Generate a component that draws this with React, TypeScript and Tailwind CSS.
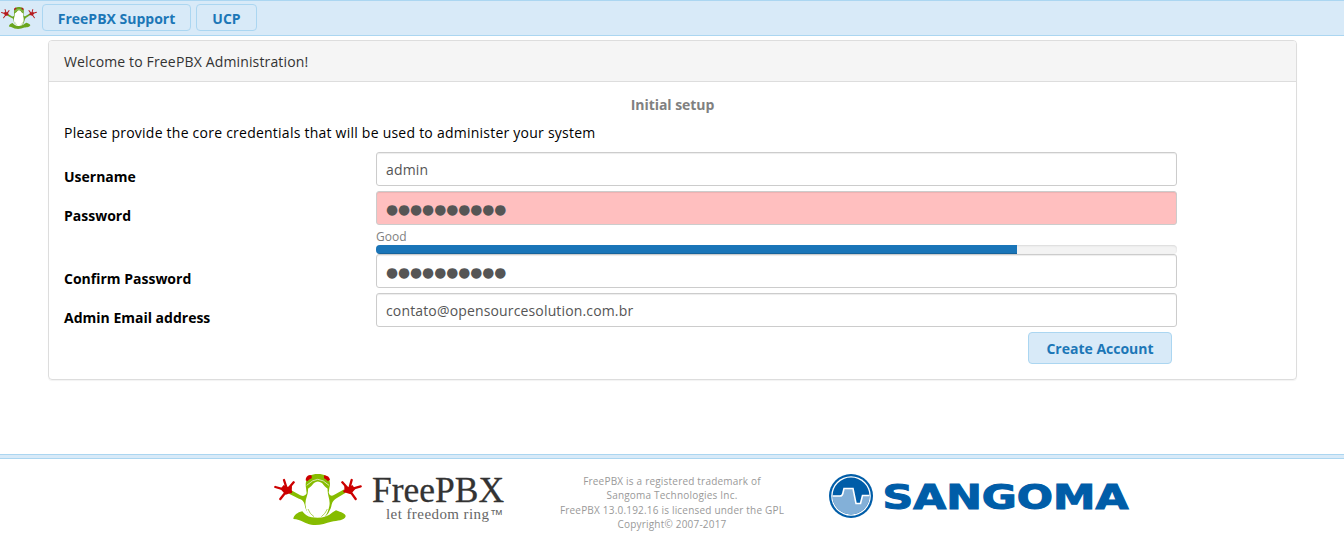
import React from 'react';

function Frog({ className, small }: { className: string; small?: boolean }) {
  const green = small ? '#6aa51e' : '#86bc00';
  const red = small ? '#b51a1e' : '#cc0000';
  return (
    <svg className={className} viewBox="12 18 264 153" preserveAspectRatio="none" aria-hidden="true">
      <path d="M108 60 C104 38 114 25 124 21 Q143 14 163 21 C176 26 184 40 178 60 L176 74 Q180 88 193 80 L223 64 L227 74 L202 89 C188 97 186 104 184 115 Q180 132 166 146 L122 146 C110 132 105 120 104 110 C102 99 96 95 87 92 L57 77 L61 65 L91 82 Q105 88 110 76Z" fill={green} />
      <path d="M114 62 C123 56 126 52 132 45 Q143 36 156 45 C162 52 166 58 173 62 C171 82 182 94 178 114 C174 134 168 143 160 152 L126 152 C116 142 109 132 107 114 C103 94 116 82 114 62Z" fill="#fff" />
      <path d="M70 153 C71 142 82 133 97 130 C103 138 112 146 125 148 C150 152 172 148 188 133 L198 127 C214 133 227 137 227 145 C224 158 202 158 184 161 C165 166 148 173 124 170 C106 168 94 154 70 153Z" fill={green} />
      <path d="M110 52 Q129 34 143 34 Q159 34 177 52" fill="none" stroke="#fff" strokeWidth="2" />
      <path d="M114 123 Q119 138 132 146 M172 123 Q166 138 154 146" fill="none" stroke={green} strokeWidth="2" />
      <path d="M107 37 Q107 23 120 21 Q127 21 125 31 Q117 34 112 40Z M162 22 Q178 23 180 36 L173 39 Q167 33 162 31Z" fill={red} />
      <g fill="none" stroke={red} strokeWidth="7" strokeLinecap="round">
        <path d="M52 67 L42 36 M52 65 L71 43 M51 67 L16 57 M50 69 L31 93 M48 68 L63 72" />
        <path d="M237 65 L245 36 M235 63 L217 43 M238 65 L272 55 M239 68 L257 93 M238 67 L223 70" />
      </g>
      <path d="M41 51 L53 57 L66 54 L65 74 L47 80 L31 63 Z M223 53 L236 58 L247 51 L256 63 L242 79 L223 73Z" fill={red} />
    </svg>
  );
}

function SangomaLogo() {
  return (
    <svg className="block h-[46px] w-[304px]" viewBox="828 473 304 46" role="img" aria-label="Sangoma">
      <circle cx="851" cy="496" r="22" fill="#005da8" />
      <circle cx="851" cy="496" r="19.8" fill="#fff" />
      <circle cx="851" cy="496" r="18.5" fill="#005da8" />
      <path d="M832.5 496 H840.5 Q842.5 496 843 493.5 L844.5 488.5 H852.5 L855.5 501.5 Q856 504 857 504 H859 Q860.5 504 861 502 L862.5 496 H869.5 A18.5 18.5 0 0 1 832.5 496Z" fill="#83b0d8" />
      <path d="M832.5 496 H840 Q842.3 496 842.8 493.5 L844 488.5 H853 L856 503.5 H860.5 L862.5 495.5 H869.5" fill="none" stroke="#fff" strokeWidth="1.6" />
      <text x="882.5" y="509.2" textLength="246" lengthAdjust="spacingAndGlyphs" className="font-['DejaVu_Sans',sans-serif] text-[34.5px] font-bold" fill="#005da8" stroke="#005da8" strokeWidth="1.1">SANGOMA</text>
    </svg>
  );
}

const inputBox = 'flex h-[34px] w-[801px] items-center rounded-[3px] border border-[#ccc] px-[9px] pt-px text-[#555] tracking-[0.15px] shadow-[inset_0_1px_1px_rgba(0,0,0,0.075)]';

function Row({ label, children }: { label: string; children: React.ReactNode }) {
  return (
    <div className="flex">
      <div className="-mb-px w-[312px] pt-[15px] font-bold text-black">{label}</div>
      <div>{children}</div>
    </div>
  );
}

function Dots() {
  return <span className="font-['DejaVu_Sans',sans-serif] text-[13.8px] leading-5 tracking-normal">●●●●●●●●●●</span>;
}

export default function App() {
  return (
    <div className="flex h-[554px] flex-col overflow-hidden bg-white font-['Open_Sans',sans-serif] text-[14px] leading-5 text-[#333]">
      <header className="flex h-9 shrink-0 border-y border-[#abd6f1] bg-[#d8eaf8] pt-[3px]">
        <Frog small className="ml-px mt-[3px] h-[22px] w-9" />
        <nav className="ml-[5px] flex gap-[5px] font-bold text-[#1c77b7]">
          <button className="h-[27px] w-[149px] rounded-[4px] border border-[#abd6f1] pt-px leading-[25px]">FreePBX Support</button>
          <button className="h-[27px] w-[61px] rounded-[4px] border border-[#abd6f1] pt-px leading-[25px]">UCP</button>
        </nav>
      </header>

      <main className="ml-12 mt-1 h-[340px] w-[1249px] shrink-0 overflow-hidden rounded-[4px] border border-[#ddd] shadow-[0_1px_1px_rgba(0,0,0,0.05)]">
        <div className="h-[41px] border-b border-[#ddd] bg-[#f5f5f5] px-[15px] pt-[11px] tracking-[0.15px]">Welcome to FreePBX Administration!</div>
        <div className="px-[15px] pt-[13px]">
          <h1 className="text-center font-bold tracking-[-0.05px] text-[#808080]">Initial setup</h1>
          <p className="mt-2 tracking-[0.236px] text-black">Please provide the core credentials that will be used to administer your system</p>
          <form className="mt-[9px] flex flex-col gap-[5px]">
            <Row label="Username"><div className={inputBox}>admin</div></Row>
            <Row label="Password">
              <div className={inputBox + ' bg-[#ffbfbf]'}><Dots /></div>
              <div className="h-5 pt-[3px] text-[12px] leading-[17px] text-[#808080]">Good</div>
              <div className="-mb-[5px] h-[9px] overflow-hidden rounded-[4px] bg-[#f3f3f3] shadow-[inset_0_1px_2px_rgba(0,0,0,0.1)]">
                <div className="h-full w-4/5 bg-[#1a75b8] shadow-[inset_0_-1px_0_rgba(0,0,0,0.15)]" />
              </div>
            </Row>
            <Row label="Confirm Password"><div className={inputBox}><Dots /></div></Row>
            <Row label="Admin Email address"><div className={inputBox}>contato@opensourcesolution.com.br</div></Row>
            <button type="button" className="ml-[964px] h-8 w-36 rounded-[4px] border border-[#abd6f1] bg-[#d8eaf8] pt-px font-bold text-[#1c77b7]">Create Account</button>
          </form>
        </div>
      </main>

      <footer className="mt-[74px]">
        <div className="h-[5px] border-y border-[#abd6f1] bg-[#d8eaf8]" />
        <div className="flex">
          <Frog className="ml-[274px] mt-[15px] h-[51px] w-[88px]" />
          <svg className="ml-[6px] mt-3 h-[56px] w-[140px]" viewBox="368 471 140 56" role="img" aria-label="FreePBX let freedom ring">
            <text x="372" y="501.5" textLength="132" lengthAdjust="spacingAndGlyphs" className="font-['Liberation_Serif',serif] text-[35px]" fill="#333" stroke="#333" strokeWidth=".3">FreePBX</text>
            <text x="386" y="519" textLength="103" lengthAdjust="spacing" className="font-['Liberation_Serif',serif] text-[15px]" fill="#666">let freedom ring</text>
            <text x="490" y="519" textLength="13" lengthAdjust="spacingAndGlyphs" className="font-['Liberation_Sans',sans-serif] text-[13px]" fill="#666">™</text>
          </svg>
          <div className="ml-[34px] mt-[15px] w-[260px] text-center text-[10px] leading-[14.3px] tracking-[0.2px] text-[#999]">
            FreePBX is a registered trademark of<br />Sangoma Technologies Inc.<br />FreePBX 13.0.192.16 is licensed under the GPL<br />Copyright© 2007-2017
          </div>
          <div className="ml-[26px] mt-[14px]"><SangomaLogo /></div>
        </div>
      </footer>
    </div>
  );
}
